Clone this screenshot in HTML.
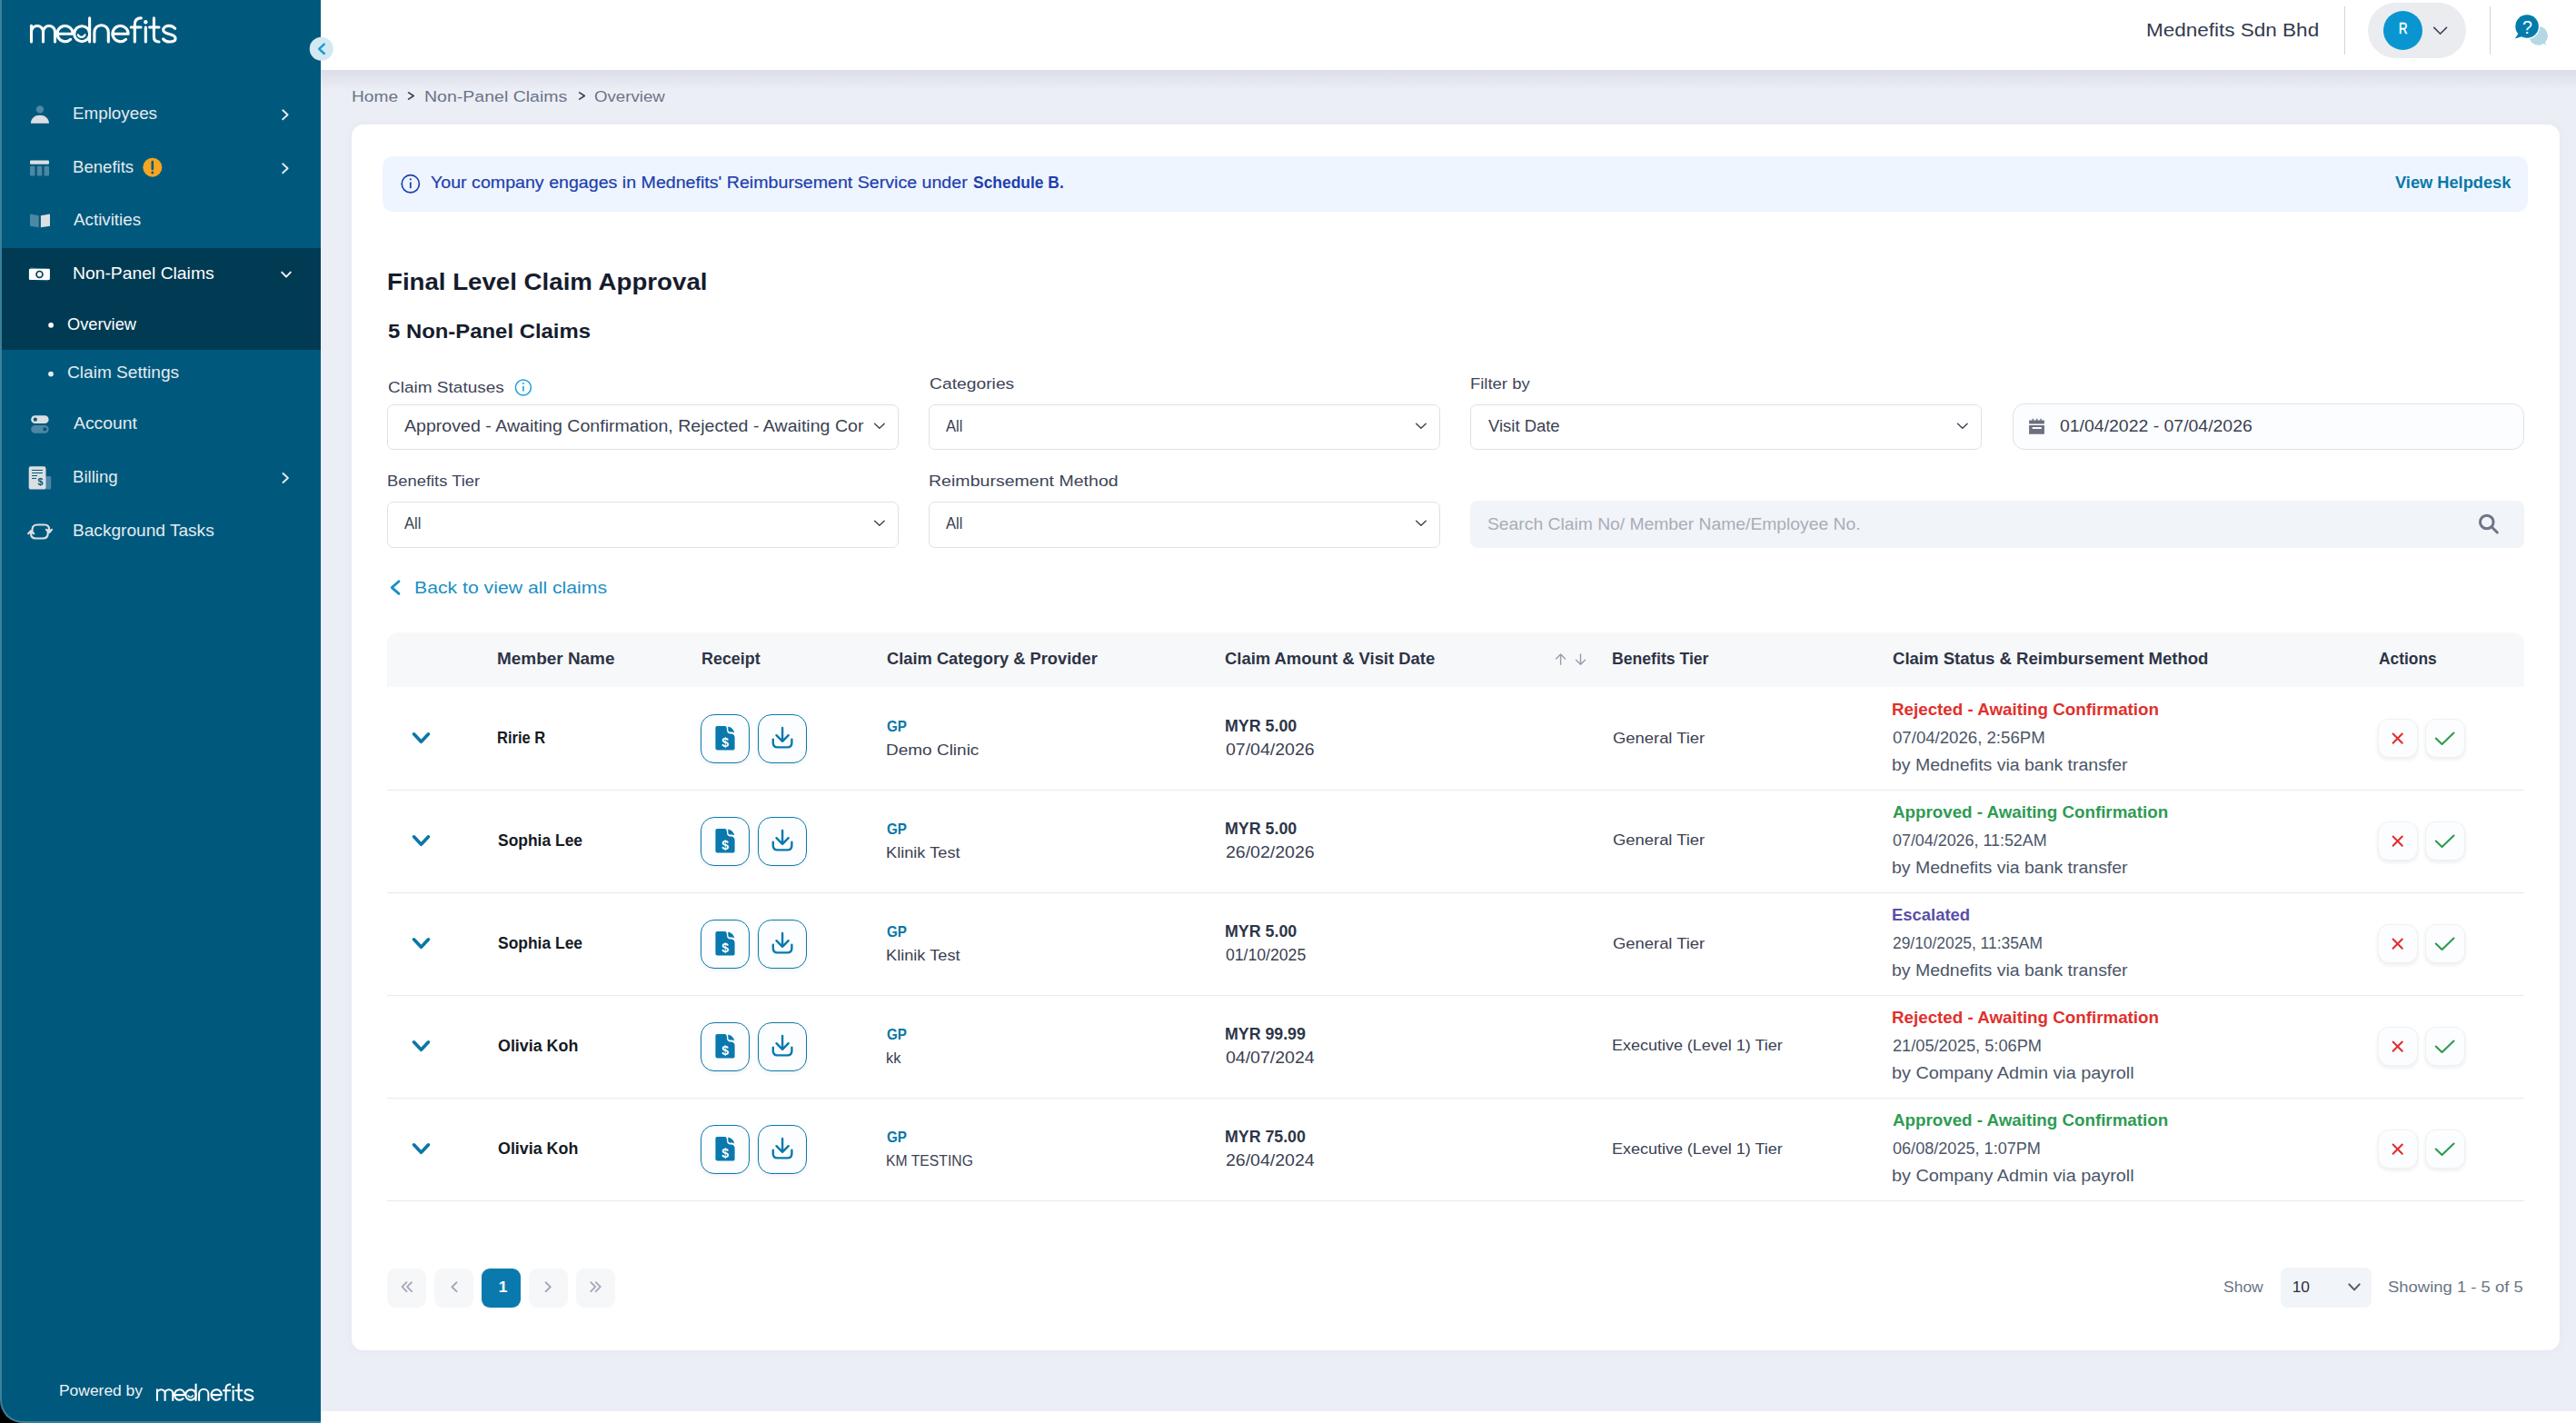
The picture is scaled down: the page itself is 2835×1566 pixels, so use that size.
<!DOCTYPE html>
<html><head><meta charset="utf-8"><title>Mednefits - Non-Panel Claims</title>
<style>
html,body{margin:0;padding:0;}
body{width:2835px;height:1566px;overflow:hidden;position:relative;background:#ffffff;font-family:"Liberation Sans",sans-serif;}
.t{position:absolute;white-space:nowrap;line-height:1;transform-origin:0 0;}
.a{position:absolute;box-sizing:border-box;}
svg{position:absolute;overflow:visible;}
</style></head><body>
<!-- window corner -->
<div class="a" style="left:0;top:1520px;width:40px;height:46px;background:#000"></div>
<!-- main bg -->
<div class="a" style="left:353px;top:0;width:2482px;height:1553px;background:#eceef6"></div>
<!-- header shadow -->
<div class="a" style="left:353px;top:77px;width:2482px;height:22px;background:linear-gradient(#dcdde7,#eceef6)"></div>
<!-- header -->
<div class="a" style="left:353px;top:0;width:2482px;height:77px;background:#ffffff"></div>
<!-- sidebar -->
<div class="a" style="left:0;top:0;width:353px;height:1566px;background:#00597d;border-left:2px solid #3c7f9b;border-bottom:2px solid #3c7f9b;border-bottom-left-radius:25px;"></div>
<div class="a" style="left:2px;top:273px;width:351px;height:112px;background:#013b53"></div>

<!-- card -->
<div class="a" style="left:387px;top:137px;width:2430px;height:1349px;background:#ffffff;border-radius:13px;box-shadow:0 0 10px rgba(190,194,215,0.15)"></div>
<!-- banner -->
<div class="a" style="left:421px;top:172px;width:2361px;height:61px;background:#eef5fe;border-radius:12px"></div>

<!-- selects -->
<div class="a" style="left:426px;top:445px;width:563px;height:50px;border:1.3px solid #dfe1ea;border-radius:7px;background:#fff"></div>
<div class="a" style="left:1022px;top:445px;width:563px;height:50px;border:1.3px solid #dfe1ea;border-radius:7px;background:#fff"></div>
<div class="a" style="left:1618px;top:445px;width:563px;height:50px;border:1.3px solid #dfe1ea;border-radius:7px;background:#fff"></div>
<div class="a" style="left:2215px;top:444px;width:563px;height:51px;border:1.3px solid #dfe1ea;border-radius:13px;background:#fcfdfe"></div>
<div class="a" style="left:426px;top:552px;width:563px;height:51px;border:1.3px solid #dfe1ea;border-radius:7px;background:#fff"></div>
<div class="a" style="left:1022px;top:552px;width:563px;height:51px;border:1.3px solid #dfe1ea;border-radius:7px;background:#fff"></div>
<div class="a" style="left:1618px;top:551px;width:1160px;height:52px;border-radius:8px;background:#f1f4f8"></div>

<!-- table header -->
<div class="a" style="left:426px;top:696px;width:2352px;height:60px;background:#f7f8fa;border-radius:12px 12px 0 0"></div>
<!-- row borders -->
<div class="a" style="left:426px;top:868.5px;width:2352px;height:1.5px;background:#e7e9ef"></div>
<div class="a" style="left:426px;top:981.5px;width:2352px;height:1.5px;background:#e7e9ef"></div>
<div class="a" style="left:426px;top:1094.5px;width:2352px;height:1.5px;background:#e7e9ef"></div>
<div class="a" style="left:426px;top:1207.5px;width:2352px;height:1.5px;background:#e7e9ef"></div>
<div class="a" style="left:426px;top:1320.5px;width:2352px;height:1.5px;background:#e7e9ef"></div>

<!-- pagination -->
<div class="a" style="left:426px;top:1395.5px;width:43px;height:43px;border-radius:9px;background:#f6f7f9"></div>
<div class="a" style="left:478px;top:1395.5px;width:43px;height:43px;border-radius:9px;background:#f6f7f9"></div>
<div class="a" style="left:530px;top:1395.5px;width:43px;height:43px;border-radius:9px;background:#0a7aae"></div>
<div class="a" style="left:582px;top:1395.5px;width:43px;height:43px;border-radius:9px;background:#f6f7f9"></div>
<div class="a" style="left:634px;top:1395.5px;width:43px;height:43px;border-radius:9px;background:#f6f7f9"></div>
<div class="a" style="left:2510px;top:1395px;width:100px;height:44px;border-radius:8px;background:#f1f4f8"></div>

<!-- header pill + dividers -->
<div class="a" style="left:2580px;top:7px;width:1.3px;height:53px;background:#d3d4df"></div>
<div class="a" style="left:2740px;top:7px;width:1.3px;height:53px;background:#d3d4df"></div>
<div class="a" style="left:2606px;top:3px;width:108px;height:61px;border-radius:31px;background:#ebecf0"></div>
<div class="a" style="left:2623px;top:12px;width:43px;height:43px;border-radius:50%;background:#0895d0"></div>
<div class="a" style="left:771px;top:786px;width:54px;height:54px;border:1.3px solid #0979ad;border-radius:15px;background:#fcfdff;box-shadow:0 2px 5px rgba(0,0,0,0.06)"></div>
<div class="a" style="left:834px;top:786px;width:54px;height:54px;border:1.3px solid #0979ad;border-radius:15px;background:#fcfdff;box-shadow:0 2px 5px rgba(0,0,0,0.06)"></div>
<div class="a" style="left:2617px;top:791px;width:44px;height:43px;border:1px solid #f0f1f5;border-radius:12px;background:#fcfdfe;box-shadow:0 2px 4px rgba(20,30,60,0.08)"></div>
<div class="a" style="left:2669px;top:791px;width:44px;height:43px;border:1px solid #f0f1f5;border-radius:12px;background:#fcfdfe;box-shadow:0 2px 4px rgba(20,30,60,0.08)"></div>
<div class="a" style="left:771px;top:899px;width:54px;height:54px;border:1.3px solid #0979ad;border-radius:15px;background:#fcfdff;box-shadow:0 2px 5px rgba(0,0,0,0.06)"></div>
<div class="a" style="left:834px;top:899px;width:54px;height:54px;border:1.3px solid #0979ad;border-radius:15px;background:#fcfdff;box-shadow:0 2px 5px rgba(0,0,0,0.06)"></div>
<div class="a" style="left:2617px;top:904px;width:44px;height:43px;border:1px solid #f0f1f5;border-radius:12px;background:#fcfdfe;box-shadow:0 2px 4px rgba(20,30,60,0.08)"></div>
<div class="a" style="left:2669px;top:904px;width:44px;height:43px;border:1px solid #f0f1f5;border-radius:12px;background:#fcfdfe;box-shadow:0 2px 4px rgba(20,30,60,0.08)"></div>
<div class="a" style="left:771px;top:1012px;width:54px;height:54px;border:1.3px solid #0979ad;border-radius:15px;background:#fcfdff;box-shadow:0 2px 5px rgba(0,0,0,0.06)"></div>
<div class="a" style="left:834px;top:1012px;width:54px;height:54px;border:1.3px solid #0979ad;border-radius:15px;background:#fcfdff;box-shadow:0 2px 5px rgba(0,0,0,0.06)"></div>
<div class="a" style="left:2617px;top:1017px;width:44px;height:43px;border:1px solid #f0f1f5;border-radius:12px;background:#fcfdfe;box-shadow:0 2px 4px rgba(20,30,60,0.08)"></div>
<div class="a" style="left:2669px;top:1017px;width:44px;height:43px;border:1px solid #f0f1f5;border-radius:12px;background:#fcfdfe;box-shadow:0 2px 4px rgba(20,30,60,0.08)"></div>
<div class="a" style="left:771px;top:1125px;width:54px;height:54px;border:1.3px solid #0979ad;border-radius:15px;background:#fcfdff;box-shadow:0 2px 5px rgba(0,0,0,0.06)"></div>
<div class="a" style="left:834px;top:1125px;width:54px;height:54px;border:1.3px solid #0979ad;border-radius:15px;background:#fcfdff;box-shadow:0 2px 5px rgba(0,0,0,0.06)"></div>
<div class="a" style="left:2617px;top:1130px;width:44px;height:43px;border:1px solid #f0f1f5;border-radius:12px;background:#fcfdfe;box-shadow:0 2px 4px rgba(20,30,60,0.08)"></div>
<div class="a" style="left:2669px;top:1130px;width:44px;height:43px;border:1px solid #f0f1f5;border-radius:12px;background:#fcfdfe;box-shadow:0 2px 4px rgba(20,30,60,0.08)"></div>
<div class="a" style="left:771px;top:1238px;width:54px;height:54px;border:1.3px solid #0979ad;border-radius:15px;background:#fcfdff;box-shadow:0 2px 5px rgba(0,0,0,0.06)"></div>
<div class="a" style="left:834px;top:1238px;width:54px;height:54px;border:1.3px solid #0979ad;border-radius:15px;background:#fcfdff;box-shadow:0 2px 5px rgba(0,0,0,0.06)"></div>
<div class="a" style="left:2617px;top:1243px;width:44px;height:43px;border:1px solid #f0f1f5;border-radius:12px;background:#fcfdfe;box-shadow:0 2px 4px rgba(20,30,60,0.08)"></div>
<div class="a" style="left:2669px;top:1243px;width:44px;height:43px;border:1px solid #f0f1f5;border-radius:12px;background:#fcfdfe;box-shadow:0 2px 4px rgba(20,30,60,0.08)"></div>
<svg style="left:0;top:0" width="2835" height="1566" viewBox="0 0 2835 1566">
<defs>
<g id="logo" fill="none" stroke="#fff" stroke-width="3.1" stroke-linecap="round" stroke-linejoin="round">
  <path d="M34.5,46 V28.4 M34.5,35 A6.5,6.5 0 0 1 47.5,35 V46 M47.5,35 A6.5,6.5 0 0 1 60.5,35 V46"/>
  <path d="M63,37.3 H80.2 A8.6,8.6 0 1 0 77.6,43.3"/>
  <circle cx="90.2" cy="37.2" r="8.5"/>
  <path d="M98.6,19.9 V46"/>
  <path d="M85.9,38.3 A3.9,3.4 0 0 0 93.5,38.3" stroke-width="2.3"/>
  <path d="M103.9,46 V35.4 A7.7,7.7 0 0 1 119.3,35.4 V46"/>
  <path d="M123.9,37.3 H141.1 A8.6,8.6 0 1 0 138.5,43.3"/>
  <path d="M148.3,46 V27 C148.3,22.2 150.8,19.9 155.3,19.9 M144.2,30 H155"/>
  <path d="M160.3,30 V46"/>
  <circle cx="160.3" cy="24.3" r="2.2" fill="#fff" stroke="none"/>
  <path d="M169.4,19.9 V40.8 C169.4,44.5 171.2,46 175,46 M164.6,30 H175"/>
  <path d="M192.6,31.3 C190.6,29.2 188.2,28.4 185.8,28.4 C182.2,28.4 179.7,30.2 179.7,33 C179.7,35.8 182.4,36.6 186.2,37.4 C190.3,38.3 193.1,39.4 193.1,42.2 C193.1,45 190.6,46 186.6,46 C183.6,46 181.2,45.1 179.6,43"/>
</g>
</defs>
<use href="#logo"/>
<g transform="translate(150,1510.3) scale(0.665)"><use href="#logo"/></g>

<!-- collapse button -->
<circle cx="353.7" cy="53.7" r="13" fill="#d2e8f2"/>
<path d="M356.8,48.6 L351.2,53.8 L356.8,59" fill="none" stroke="#1a9ad6" stroke-width="2.4" stroke-linecap="round" stroke-linejoin="round"/>

<!-- sidebar icons -->
<g fill="#dcdfe2">
  <circle cx="44" cy="120.4" r="4.2" fill="#4c87a4"/>
  <path d="M33.9,135.8 C33.9,130.2 38.4,126.8 43.9,126.8 C49.4,126.8 53.9,130.2 53.9,135.8 Z"/>
  <rect x="33" y="176.5" width="21" height="4.3" rx="1"/>
  <rect x="33" y="182.8" width="5.4" height="10.8" rx="1.3" fill="#4c87a4"/>
  <rect x="40.8" y="182.8" width="5.4" height="10.8" rx="1.3" fill="#4c87a4"/>
  <rect x="48.6" y="182.8" width="5.4" height="10.8" rx="1.3" fill="#4c87a4"/>
  <path d="M33,235.4 L42.7,237.3 L42.7,250.3 L33,248.7 Z" fill="#4c87a4"/>
  <path d="M44.9,237.3 L55,235.4 L55,248.7 L44.9,250.3 Z"/>
  <path d="M33.5,294.2 L52,296 L53,309.5 L35,307.8 Z" fill="#2e6a86"/>
  <rect x="31.9" y="295.8" width="23" height="12.2" rx="1.2" fill="#ffffff"/>
  <circle cx="43.5" cy="301.9" r="3.4" fill="none" stroke="#013b53" stroke-width="1.7"/>
  <rect x="34.2" y="457.3" width="19.4" height="8.8" rx="4.4"/>
  <circle cx="38.8" cy="461.7" r="2.1" fill="#00597d"/>
  <rect x="34.2" y="468" width="19.4" height="8.7" rx="4.35" fill="#4c87a4"/>
  <circle cx="49.3" cy="472.3" r="2.1" fill="#00597d"/>
  <rect x="50" y="524" width="6.2" height="14.6" rx="1.5" fill="#4c87a4"/>
  <rect x="31.7" y="513.3" width="18.8" height="25.3" rx="2.2"/>
  <g stroke="#00597d" stroke-width="1.2"><path d="M35,517.5 H47 M35,520.5 H47 M35,523.5 H41 M35,526.5 H40"/></g>
  <text x="44.3" y="533.5" font-family="Liberation Sans" font-weight="700" font-size="10.5" fill="#00597d" text-anchor="middle">$</text>
</g>
<g fill="none" stroke="#dcdfe2" stroke-width="2.2" stroke-linecap="round" stroke-linejoin="round">
  <path d="M35.5,586.5 V583 C35.5,579.5 37.5,577.5 41,577.5 H49 C52.5,577.5 54.2,579.5 54.2,583 V585.5"/>
  <path d="M51,582.8 L54.2,586 L57,582.8"/>
  <path d="M52.7,583.5 V587 C52.7,590.5 50.7,592.5 47.2,592.5 H39.2 C35.7,592.5 34,590.5 34,587 V584.5"/>
  <path d="M31.2,587.2 L34,584.2 L37.2,587.2"/>
</g>
<!-- sidebar chevrons -->
<g fill="none" stroke="#e5ebef" stroke-width="1.9" stroke-linecap="round" stroke-linejoin="round">
  <path d="M311.2,121.3 L316.6,126.3 L311.2,131.3"/>
  <path d="M311.2,180.3 L316.6,185.3 L311.2,190.3"/>
  <path d="M311.5,521 L316.9,526 L311.5,531"/>
  <path d="M310.2,299.6 L315,304.6 L319.8,299.6" stroke="#ffffff"/>
</g>
<circle cx="56.1" cy="357.8" r="2.9" fill="#ffffff"/>
<circle cx="56" cy="411.6" r="2.9" fill="#e5ebef"/>
<circle cx="167.8" cy="184.2" r="10.5" fill="#f5a623"/>
<path d="M167.8,178 V186" stroke="#00597d" stroke-width="2.6" stroke-linecap="round"/>
<circle cx="167.8" cy="190" r="1.4" fill="#00597d"/>

<!-- header chevron + help -->
<path d="M2678.3,29.9 L2685.6,37.3 L2693,29.9" fill="none" stroke="#3b3d54" stroke-width="1.5"/>
<circle cx="2793.6" cy="39.4" r="10.4" fill="#b4d8e6"/>
<path d="M2796,45 L2802.2,50 L2799.5,42" fill="#b4d8e6"/>
<circle cx="2781.1" cy="29" r="14.2" fill="#ffffff"/>
<circle cx="2781.1" cy="29" r="12.8" fill="#037cac"/>
<path d="M2772,36 L2767.9,42.5 L2776,40" fill="#037cac"/>
<text x="2781.4" y="36.5" font-family="Liberation Sans" font-weight="400" font-size="19.5" fill="#fff" text-anchor="middle">?</text>

<!-- breadcrumb chevrons -->
<g fill="none" stroke="#3a3f55" stroke-width="1.7" stroke-linecap="round" stroke-linejoin="round">
  <path d="M449.6,101.9 L455.2,105.5 L449.6,109.1"/>
  <path d="M637.7,101.9 L643.3,105.5 L637.7,109.1"/>
</g>

<!-- banner info icon -->
<circle cx="451.8" cy="202.3" r="9.6" fill="none" stroke="#1f3fae" stroke-width="1.7"/>
<path d="M451.8,200.5 V207.2" stroke="#1f3fae" stroke-width="1.8"/>
<circle cx="451.8" cy="197.3" r="1.1" fill="#1f3fae"/>
<!-- claim status info icon -->
<circle cx="575.9" cy="426.5" r="8.5" fill="none" stroke="#1a9fd8" stroke-width="1.5"/>
<path d="M575.9,424.8 V430.6" stroke="#1a9fd8" stroke-width="1.6"/>
<circle cx="575.9" cy="422" r="1" fill="#1a9fd8"/>

<!-- select chevrons -->
<g fill="none" stroke="#3b4253" stroke-width="1.4" stroke-linecap="round" stroke-linejoin="round">
  <path d="M962.6,466.2 L967.9,471.3 L973.2,466.2"/>
  <path d="M1558.6,466.2 L1563.9,471.3 L1569.2,466.2"/>
  <path d="M2154.5,466.2 L2159.8,471.3 L2165.1,466.2"/>
  <path d="M962.6,573.2 L967.9,578.3 L973.2,573.2"/>
  <path d="M1558.6,573.2 L1563.9,578.3 L1569.2,573.2"/>
</g>
<!-- calendar -->
<g fill="#6b7080">
  <rect x="2233.1" y="462.6" width="16.8" height="3.8" rx="0.6"/>
  <rect x="2236.6" y="460.8" width="1.4" height="2.5"/>
  <rect x="2240.9" y="460.8" width="1.4" height="2.5"/>
  <rect x="2245.3" y="460.8" width="1.4" height="2.5"/>
  <path d="M2233.1,468.1 H2249.9 V477.8 H2233.1 Z M2236.6,469.9 V471.9 H2246.8 V469.9 Z" fill-rule="evenodd"/>
</g>
<!-- search -->
<g fill="none" stroke="#6e7489" stroke-width="3" stroke-linecap="round">
  <circle cx="2736.8" cy="574.5" r="7.3"/>
  <path d="M2742.3,580 L2748.3,586"/>
</g>
<!-- back chevron -->
<path d="M439,639.8 L431.2,646.6 L439,653.4" fill="none" stroke="#1a8fc4" stroke-width="2.8" stroke-linecap="round" stroke-linejoin="round"/>
<!-- sort arrows -->
<g fill="none" stroke="#979eab" stroke-width="1.4" stroke-linecap="round" stroke-linejoin="round">
  <path d="M1717.6,720 V731.3 M1712.6,725 L1717.6,720 L1722.6,725"/>
  <path d="M1739.5,720 V731.3 M1734.5,726.3 L1739.5,731.3 L1744.5,726.3"/>
</g>

<!-- pagination icons -->
<g fill="none" stroke="#a5a8b8" stroke-width="1.9" stroke-linecap="round" stroke-linejoin="round">
  <path d="M447.5,1411.2 L442.6,1416.2 L447.5,1421.2 M453,1411.2 L448.1,1416.2 L453,1421.2"/>
  <path d="M502.6,1411.2 L497.4,1416.2 L502.6,1421.2"/>
  <path d="M600.6,1411.2 L605.8,1416.2 L600.6,1421.2"/>
  <path d="M650.3,1411.2 L655.2,1416.2 L650.3,1421.2 M655.8,1411.2 L660.7,1416.2 L655.8,1421.2"/>
</g>
<path d="M2585.3,1413.4 L2591,1419.4 L2596.7,1413.4" fill="none" stroke="#555b6e" stroke-width="2.1" stroke-linecap="round" stroke-linejoin="round"/>
<path d="M455.5,807.8 L463.5,816.3 L471.5,807.8" fill="none" stroke="#0a76a5" stroke-width="3.6" stroke-linecap="round" stroke-linejoin="round"/>
<g fill="#0979ad">
<path d="M789.5,798.9 H797.6 C799.3,798.9 799.9,800.3 799.9,802 C799.9,805.8 801.1,807.6 804.6,807.6 C807,807.6 808.6,809.3 808.6,811.5 V823.4 C808.6,824.7 807.6,825.5 806.4,825.5 H789.6 C788.3,825.5 787.4,824.6 787.4,823.3 V801 C787.4,799.8 788.3,798.9 789.5,798.9 Z"/>
<path d="M801.3,799.4 C805.3,800.2 807.9,803.2 808.3,806.6 C806.5,805.4 804.5,805.7 803.3,805.6 C801.9,805.5 801.3,804.2 801.3,802.5 Z"/>
</g>
<text x="798.2" y="822.4" font-family="Liberation Sans" font-weight="700" font-size="14" fill="#fff" text-anchor="middle">$</text>
<g fill="none" stroke="#0979ad" stroke-width="2.4" stroke-linecap="round" stroke-linejoin="round">
<path d="M861.1,801 V815.8 M854.5,809.2 L861.1,815.8 L867.7,809.2"/>
<path d="M850.8,813.8 V817.5 C850.8,820.8 852.4,822.4 855.6,822.4 H866.6 C869.8,822.4 871.4,820.8 871.4,817.5 V813.8"/>
</g>
<path d="M2633.6,807.5 L2643.8,817.8 M2643.8,807.5 L2633.6,817.8" fill="none" stroke="#e02d2d" stroke-width="2" stroke-linecap="round"/>
<path d="M2680.8,812.5 L2687.5,819 L2700.5,806.5" fill="none" stroke="#2e9a4e" stroke-width="2.1" stroke-linecap="round" stroke-linejoin="round"/>
<path d="M455.5,920.8 L463.5,929.3 L471.5,920.8" fill="none" stroke="#0a76a5" stroke-width="3.6" stroke-linecap="round" stroke-linejoin="round"/>
<g fill="#0979ad">
<path d="M789.5,911.9 H797.6 C799.3,911.9 799.9,913.3 799.9,915 C799.9,918.8 801.1,920.6 804.6,920.6 C807,920.6 808.6,922.3 808.6,924.5 V936.4 C808.6,937.7 807.6,938.5 806.4,938.5 H789.6 C788.3,938.5 787.4,937.6 787.4,936.3 V914 C787.4,912.8 788.3,911.9 789.5,911.9 Z"/>
<path d="M801.3,912.4 C805.3,913.2 807.9,916.2 808.3,919.6 C806.5,918.4 804.5,918.7 803.3,918.6 C801.9,918.5 801.3,917.2 801.3,915.5 Z"/>
</g>
<text x="798.2" y="935.4" font-family="Liberation Sans" font-weight="700" font-size="14" fill="#fff" text-anchor="middle">$</text>
<g fill="none" stroke="#0979ad" stroke-width="2.4" stroke-linecap="round" stroke-linejoin="round">
<path d="M861.1,914 V928.8 M854.5,922.2 L861.1,928.8 L867.7,922.2"/>
<path d="M850.8,926.8 V930.5 C850.8,933.8 852.4,935.4 855.6,935.4 H866.6 C869.8,935.4 871.4,933.8 871.4,930.5 V926.8"/>
</g>
<path d="M2633.6,920.5 L2643.8,930.8 M2643.8,920.5 L2633.6,930.8" fill="none" stroke="#e02d2d" stroke-width="2" stroke-linecap="round"/>
<path d="M2680.8,925.5 L2687.5,932 L2700.5,919.5" fill="none" stroke="#2e9a4e" stroke-width="2.1" stroke-linecap="round" stroke-linejoin="round"/>
<path d="M455.5,1033.8 L463.5,1042.3 L471.5,1033.8" fill="none" stroke="#0a76a5" stroke-width="3.6" stroke-linecap="round" stroke-linejoin="round"/>
<g fill="#0979ad">
<path d="M789.5,1024.9 H797.6 C799.3,1024.9 799.9,1026.3 799.9,1028 C799.9,1031.8 801.1,1033.6 804.6,1033.6 C807,1033.6 808.6,1035.3 808.6,1037.5 V1049.4 C808.6,1050.7 807.6,1051.5 806.4,1051.5 H789.6 C788.3,1051.5 787.4,1050.6 787.4,1049.3 V1027 C787.4,1025.8 788.3,1024.9 789.5,1024.9 Z"/>
<path d="M801.3,1025.4 C805.3,1026.2 807.9,1029.2 808.3,1032.6 C806.5,1031.4 804.5,1031.7 803.3,1031.6 C801.9,1031.5 801.3,1030.2 801.3,1028.5 Z"/>
</g>
<text x="798.2" y="1048.4" font-family="Liberation Sans" font-weight="700" font-size="14" fill="#fff" text-anchor="middle">$</text>
<g fill="none" stroke="#0979ad" stroke-width="2.4" stroke-linecap="round" stroke-linejoin="round">
<path d="M861.1,1027 V1041.8 M854.5,1035.2 L861.1,1041.8 L867.7,1035.2"/>
<path d="M850.8,1039.8 V1043.5 C850.8,1046.8 852.4,1048.4 855.6,1048.4 H866.6 C869.8,1048.4 871.4,1046.8 871.4,1043.5 V1039.8"/>
</g>
<path d="M2633.6,1033.5 L2643.8,1043.8 M2643.8,1033.5 L2633.6,1043.8" fill="none" stroke="#e02d2d" stroke-width="2" stroke-linecap="round"/>
<path d="M2680.8,1038.5 L2687.5,1045 L2700.5,1032.5" fill="none" stroke="#2e9a4e" stroke-width="2.1" stroke-linecap="round" stroke-linejoin="round"/>
<path d="M455.5,1146.8 L463.5,1155.3 L471.5,1146.8" fill="none" stroke="#0a76a5" stroke-width="3.6" stroke-linecap="round" stroke-linejoin="round"/>
<g fill="#0979ad">
<path d="M789.5,1137.9 H797.6 C799.3,1137.9 799.9,1139.3 799.9,1141 C799.9,1144.8 801.1,1146.6 804.6,1146.6 C807,1146.6 808.6,1148.3 808.6,1150.5 V1162.4 C808.6,1163.7 807.6,1164.5 806.4,1164.5 H789.6 C788.3,1164.5 787.4,1163.6 787.4,1162.3 V1140 C787.4,1138.8 788.3,1137.9 789.5,1137.9 Z"/>
<path d="M801.3,1138.4 C805.3,1139.2 807.9,1142.2 808.3,1145.6 C806.5,1144.4 804.5,1144.7 803.3,1144.6 C801.9,1144.5 801.3,1143.2 801.3,1141.5 Z"/>
</g>
<text x="798.2" y="1161.4" font-family="Liberation Sans" font-weight="700" font-size="14" fill="#fff" text-anchor="middle">$</text>
<g fill="none" stroke="#0979ad" stroke-width="2.4" stroke-linecap="round" stroke-linejoin="round">
<path d="M861.1,1140 V1154.8 M854.5,1148.2 L861.1,1154.8 L867.7,1148.2"/>
<path d="M850.8,1152.8 V1156.5 C850.8,1159.8 852.4,1161.4 855.6,1161.4 H866.6 C869.8,1161.4 871.4,1159.8 871.4,1156.5 V1152.8"/>
</g>
<path d="M2633.6,1146.5 L2643.8,1156.8 M2643.8,1146.5 L2633.6,1156.8" fill="none" stroke="#e02d2d" stroke-width="2" stroke-linecap="round"/>
<path d="M2680.8,1151.5 L2687.5,1158 L2700.5,1145.5" fill="none" stroke="#2e9a4e" stroke-width="2.1" stroke-linecap="round" stroke-linejoin="round"/>
<path d="M455.5,1259.8 L463.5,1268.3 L471.5,1259.8" fill="none" stroke="#0a76a5" stroke-width="3.6" stroke-linecap="round" stroke-linejoin="round"/>
<g fill="#0979ad">
<path d="M789.5,1250.9 H797.6 C799.3,1250.9 799.9,1252.3 799.9,1254 C799.9,1257.8 801.1,1259.6 804.6,1259.6 C807,1259.6 808.6,1261.3 808.6,1263.5 V1275.4 C808.6,1276.7 807.6,1277.5 806.4,1277.5 H789.6 C788.3,1277.5 787.4,1276.6 787.4,1275.3 V1253 C787.4,1251.8 788.3,1250.9 789.5,1250.9 Z"/>
<path d="M801.3,1251.4 C805.3,1252.2 807.9,1255.2 808.3,1258.6 C806.5,1257.4 804.5,1257.7 803.3,1257.6 C801.9,1257.5 801.3,1256.2 801.3,1254.5 Z"/>
</g>
<text x="798.2" y="1274.4" font-family="Liberation Sans" font-weight="700" font-size="14" fill="#fff" text-anchor="middle">$</text>
<g fill="none" stroke="#0979ad" stroke-width="2.4" stroke-linecap="round" stroke-linejoin="round">
<path d="M861.1,1253 V1267.8 M854.5,1261.2 L861.1,1267.8 L867.7,1261.2"/>
<path d="M850.8,1265.8 V1269.5 C850.8,1272.8 852.4,1274.4 855.6,1274.4 H866.6 C869.8,1274.4 871.4,1272.8 871.4,1269.5 V1265.8"/>
</g>
<path d="M2633.6,1259.5 L2643.8,1269.8 M2643.8,1259.5 L2633.6,1269.8" fill="none" stroke="#e02d2d" stroke-width="2" stroke-linecap="round"/>
<path d="M2680.8,1264.5 L2687.5,1271 L2700.5,1258.5" fill="none" stroke="#2e9a4e" stroke-width="2.1" stroke-linecap="round" stroke-linejoin="round"/>
</svg>
<div class="t" style="left:79.75px;top:117.00px;font-size:17.965px;font-weight:400;color:#e5ebef;transform:scaleX(1.0474);">Employees</div>
<div class="t" style="left:79.77px;top:176.00px;font-size:17.965px;font-weight:400;color:#e5ebef;transform:scaleX(1.0345);">Benefits</div>
<div class="t" style="left:81.20px;top:234.00px;font-size:17.965px;font-weight:400;color:#e5ebef;transform:scaleX(1.0458);">Activities</div>
<div class="t" style="left:79.72px;top:293.00px;font-size:17.965px;font-weight:400;color:#ffffff;transform:scaleX(1.0758);">Non-Panel Claims</div>
<div class="t" style="left:74.40px;top:349.00px;font-size:17.965px;font-weight:400;color:#ffffff;transform:scaleX(1.0151);">Overview</div>
<div class="t" style="left:74.40px;top:402.00px;font-size:17.965px;font-weight:400;color:#e5ebef;transform:scaleX(1.0634);">Claim Settings</div>
<div class="t" style="left:81.30px;top:458.00px;font-size:17.965px;font-weight:400;color:#e5ebef;transform:scaleX(1.0758);">Account</div>
<div class="t" style="left:80.26px;top:517.00px;font-size:17.965px;font-weight:400;color:#e5ebef;transform:scaleX(1.0367);">Billing</div>
<div class="t" style="left:80.24px;top:576.00px;font-size:17.965px;font-weight:400;color:#e5ebef;transform:scaleX(1.0637);">Background Tasks</div>
<div class="t" style="left:65.00px;top:1523.00px;font-size:15.869px;font-weight:400;color:#eef2f5;transform:scaleX(1.0988);">Powered by</div>
<div class="t" style="left:2361.90px;top:23.00px;font-size:20.510px;font-weight:400;color:#333a4d;transform:scaleX(1.0977);">Mednefits Sdn Bhd</div>
<div class="t" style="left:2639.87px;top:24.00px;font-size:15.869px;font-weight:400;color:#ffffff;transform:scaleX(0.8300);-webkit-text-stroke:0.5px #fff;">R</div>
<div class="t" style="left:387.00px;top:98.00px;font-size:17.366px;font-weight:400;color:#6b7386;transform:scaleX(1.1019);">Home</div>
<div class="t" style="left:466.58px;top:98.00px;font-size:17.366px;font-weight:400;color:#6b7386;transform:scaleX(1.1242);">Non-Panel Claims</div>
<div class="t" style="left:654.30px;top:98.00px;font-size:17.366px;font-weight:400;color:#6f7388;transform:scaleX(1.0754);">Overview</div>
<div class="t" style="left:474.40px;top:193.00px;font-size:17.516px;font-weight:400;color:#1f3fae;transform:scaleX(1.1209);-webkit-text-stroke:0.2px #1f3fae;">Your company engages in Mednefits' Reimbursement Service under</div>
<div class="t" style="left:1071.10px;top:193.00px;font-size:17.516px;font-weight:700;color:#1f3fae;transform:scaleX(0.9960);">Schedule B.</div>
<div class="t" style="left:2635.70px;top:193.00px;font-size:17.666px;font-weight:700;color:#0a78a8;transform:scaleX(1.0331);">View Helpdesk</div>
<div class="t" style="left:425.64px;top:297.00px;font-size:26.049px;font-weight:700;color:#161c2d;transform:scaleX(1.0624);">Final Level Claim Approval</div>
<div class="t" style="left:426.70px;top:353.00px;font-size:22.756px;font-weight:700;color:#161c2d;transform:scaleX(1.0499);">5 Non-Panel Claims</div>
<div class="t" style="left:426.70px;top:418.00px;font-size:17.366px;font-weight:400;color:#3d4556;transform:scaleX(1.0952);">Claim Statuses</div>
<div class="t" style="left:1022.90px;top:414.00px;font-size:17.366px;font-weight:400;color:#3d4556;transform:scaleX(1.1107);">Categories</div>
<div class="t" style="left:1618.14px;top:414.00px;font-size:17.366px;font-weight:400;color:#3d4556;transform:scaleX(1.0630);">Filter by</div>
<div class="t" style="left:425.64px;top:521.00px;font-size:17.366px;font-weight:400;color:#3d4556;transform:scaleX(1.0581);">Benefits Tier</div>
<div class="t" style="left:1021.77px;top:521.00px;font-size:17.366px;font-weight:400;color:#3d4556;transform:scaleX(1.1264);">Reimbursement Method</div>
<div class="t" style="left:445.40px;top:461.00px;font-size:17.666px;font-weight:400;color:#3b4253;transform:scaleX(1.1093);">Approved - Awaiting Confirmation, Rejected - Awaiting Cor</div>
<div class="t" style="left:1041.30px;top:461.00px;font-size:17.666px;font-weight:400;color:#3b4253;transform:scaleX(0.9412);">All</div>
<div class="t" style="left:1637.90px;top:461.00px;font-size:17.666px;font-weight:400;color:#3b4253;transform:scaleX(1.0448);">Visit Date</div>
<div class="t" style="left:2267.30px;top:461.00px;font-size:17.965px;font-weight:400;color:#3b4253;transform:scaleX(1.0824);">01/04/2022 - 07/04/2026</div>
<div class="t" style="left:445.10px;top:568.00px;font-size:17.666px;font-weight:400;color:#3b4253;transform:scaleX(0.9412);">All</div>
<div class="t" style="left:1041.30px;top:568.00px;font-size:17.666px;font-weight:400;color:#3b4253;transform:scaleX(0.9412);">All</div>
<div class="t" style="left:1636.70px;top:569.00px;font-size:17.666px;font-weight:400;color:#a9adb9;transform:scaleX(1.0925);">Search Claim No/ Member Name/Employee No.</div>
<div class="t" style="left:456.19px;top:637.00px;font-size:19.163px;font-weight:400;color:#1a8fc4;transform:scaleX(1.1066);">Back to view all claims</div>
<div class="t" style="left:546.83px;top:717.00px;font-size:17.666px;font-weight:700;color:#2d3446;transform:scaleX(1.0728);">Member Name</div>
<div class="t" style="left:771.69px;top:717.00px;font-size:17.666px;font-weight:700;color:#2d3446;transform:scaleX(1.0143);">Receipt</div>
<div class="t" style="left:976.40px;top:717.00px;font-size:17.666px;font-weight:700;color:#2d3446;transform:scaleX(1.0360);">Claim Category &amp; Provider</div>
<div class="t" style="left:1348.30px;top:717.00px;font-size:17.666px;font-weight:700;color:#2d3446;transform:scaleX(1.0424);">Claim Amount &amp; Visit Date</div>
<div class="t" style="left:1774.10px;top:717.00px;font-size:17.666px;font-weight:700;color:#2d3446;transform:scaleX(0.9985);">Benefits Tier</div>
<div class="t" style="left:2082.70px;top:717.00px;font-size:17.666px;font-weight:700;color:#2d3446;transform:scaleX(1.0508);">Claim Status &amp; Reimbursement Method</div>
<div class="t" style="left:2618.40px;top:717.00px;font-size:17.666px;font-weight:700;color:#2d3446;transform:scaleX(0.9842);">Actions</div>
<div class="t" style="left:546.96px;top:804.00px;font-size:17.516px;font-weight:700;color:#161a24;transform:scaleX(0.9432);">Ririe R</div>
<div class="t" style="left:976.40px;top:791.00px;font-size:17.217px;font-weight:700;color:#0a78a8;transform:scaleX(0.8859);">GP</div>
<div class="t" style="left:975.31px;top:817.00px;font-size:17.366px;font-weight:400;color:#3a4152;transform:scaleX(1.0938);">Demo Clinic</div>
<div class="t" style="left:1347.69px;top:791.00px;font-size:17.666px;font-weight:700;color:#2c3548;transform:scaleX(1.0092);">MYR 5.00</div>
<div class="t" style="left:1348.70px;top:816.00px;font-size:18.414px;font-weight:400;color:#3a4152;transform:scaleX(1.0600);">07/04/2026</div>
<div class="t" style="left:1775.10px;top:804.00px;font-size:17.366px;font-weight:400;color:#3a4152;transform:scaleX(1.0598);">General Tier</div>
<div class="t" style="left:2081.95px;top:773.00px;font-size:17.965px;font-weight:700;color:#e0302c;transform:scaleX(1.0450);">Rejected - Awaiting Confirmation</div>
<div class="t" style="left:2083.00px;top:803.00px;font-size:18.414px;font-weight:400;color:#4b5568;transform:scaleX(1.0113);">07/04/2026, 2:56PM</div>
<div class="t" style="left:2081.90px;top:834.00px;font-size:17.666px;font-weight:400;color:#4b5568;transform:scaleX(1.1021);">by Mednefits via bank transfer</div>
<div class="t" style="left:547.90px;top:917.00px;font-size:17.516px;font-weight:700;color:#161a24;transform:scaleX(0.9966);">Sophia Lee</div>
<div class="t" style="left:976.40px;top:904.00px;font-size:17.217px;font-weight:700;color:#0a78a8;transform:scaleX(0.8859);">GP</div>
<div class="t" style="left:975.35px;top:930.00px;font-size:17.366px;font-weight:400;color:#3a4152;transform:scaleX(1.0476);">Klinik Test</div>
<div class="t" style="left:1347.69px;top:904.00px;font-size:17.666px;font-weight:700;color:#2c3548;transform:scaleX(1.0092);">MYR 5.00</div>
<div class="t" style="left:1348.70px;top:929.00px;font-size:18.414px;font-weight:400;color:#3a4152;transform:scaleX(1.0600);">26/02/2026</div>
<div class="t" style="left:1775.10px;top:916.00px;font-size:17.366px;font-weight:400;color:#3a4152;transform:scaleX(1.0598);">General Tier</div>
<div class="t" style="left:2083.00px;top:886.00px;font-size:17.965px;font-weight:700;color:#2e9b53;transform:scaleX(1.0444);">Approved - Awaiting Confirmation</div>
<div class="t" style="left:2083.00px;top:916.00px;font-size:18.414px;font-weight:400;color:#4b5568;transform:scaleX(0.9710);">07/04/2026, 11:52AM</div>
<div class="t" style="left:2081.90px;top:947.00px;font-size:17.666px;font-weight:400;color:#4b5568;transform:scaleX(1.1021);">by Mednefits via bank transfer</div>
<div class="t" style="left:547.90px;top:1030.00px;font-size:17.516px;font-weight:700;color:#161a24;transform:scaleX(0.9966);">Sophia Lee</div>
<div class="t" style="left:976.40px;top:1017.00px;font-size:17.217px;font-weight:700;color:#0a78a8;transform:scaleX(0.8859);">GP</div>
<div class="t" style="left:975.35px;top:1043.00px;font-size:17.366px;font-weight:400;color:#3a4152;transform:scaleX(1.0476);">Klinik Test</div>
<div class="t" style="left:1347.69px;top:1017.00px;font-size:17.666px;font-weight:700;color:#2c3548;transform:scaleX(1.0092);">MYR 5.00</div>
<div class="t" style="left:1348.70px;top:1042.00px;font-size:18.414px;font-weight:400;color:#3a4152;transform:scaleX(0.9577);">01/10/2025</div>
<div class="t" style="left:1775.10px;top:1030.00px;font-size:17.366px;font-weight:400;color:#3a4152;transform:scaleX(1.0598);">General Tier</div>
<div class="t" style="left:2081.97px;top:999.00px;font-size:17.965px;font-weight:700;color:#5a4fa6;transform:scaleX(1.0261);">Escalated</div>
<div class="t" style="left:2083.00px;top:1029.00px;font-size:18.414px;font-weight:400;color:#4b5568;transform:scaleX(0.9439);">29/10/2025, 11:35AM</div>
<div class="t" style="left:2081.90px;top:1060.00px;font-size:17.666px;font-weight:400;color:#4b5568;transform:scaleX(1.1021);">by Mednefits via bank transfer</div>
<div class="t" style="left:547.90px;top:1143.00px;font-size:17.516px;font-weight:700;color:#161a24;transform:scaleX(1.0203);">Olivia Koh</div>
<div class="t" style="left:976.40px;top:1130.00px;font-size:17.217px;font-weight:700;color:#0a78a8;transform:scaleX(0.8859);">GP</div>
<div class="t" style="left:975.45px;top:1156.00px;font-size:17.366px;font-weight:400;color:#3a4152;transform:scaleX(0.9473);">kk</div>
<div class="t" style="left:1347.69px;top:1130.00px;font-size:17.666px;font-weight:700;color:#2c3548;transform:scaleX(1.0057);">MYR 99.99</div>
<div class="t" style="left:1348.70px;top:1155.00px;font-size:18.414px;font-weight:400;color:#3a4152;transform:scaleX(1.0600);">04/07/2024</div>
<div class="t" style="left:1774.07px;top:1142.00px;font-size:17.366px;font-weight:400;color:#3a4152;transform:scaleX(1.0347);">Executive (Level 1) Tier</div>
<div class="t" style="left:2081.95px;top:1112.00px;font-size:17.965px;font-weight:700;color:#e0302c;transform:scaleX(1.0450);">Rejected - Awaiting Confirmation</div>
<div class="t" style="left:2083.00px;top:1142.00px;font-size:18.414px;font-weight:400;color:#4b5568;transform:scaleX(0.9888);">21/05/2025, 5:06PM</div>
<div class="t" style="left:2081.88px;top:1173.00px;font-size:17.666px;font-weight:400;color:#4b5568;transform:scaleX(1.1229);">by Company Admin via payroll</div>
<div class="t" style="left:547.90px;top:1256.00px;font-size:17.516px;font-weight:700;color:#161a24;transform:scaleX(1.0203);">Olivia Koh</div>
<div class="t" style="left:976.40px;top:1243.00px;font-size:17.217px;font-weight:700;color:#0a78a8;transform:scaleX(0.8859);">GP</div>
<div class="t" style="left:975.49px;top:1269.00px;font-size:17.366px;font-weight:400;color:#3a4152;transform:scaleX(0.9064);">KM TESTING</div>
<div class="t" style="left:1347.69px;top:1243.00px;font-size:17.666px;font-weight:700;color:#2c3548;transform:scaleX(1.0057);">MYR 75.00</div>
<div class="t" style="left:1348.70px;top:1268.00px;font-size:18.414px;font-weight:400;color:#3a4152;transform:scaleX(1.0600);">26/04/2024</div>
<div class="t" style="left:1774.07px;top:1256.00px;font-size:17.366px;font-weight:400;color:#3a4152;transform:scaleX(1.0347);">Executive (Level 1) Tier</div>
<div class="t" style="left:2083.00px;top:1225.00px;font-size:17.965px;font-weight:700;color:#2e9b53;transform:scaleX(1.0444);">Approved - Awaiting Confirmation</div>
<div class="t" style="left:2083.00px;top:1255.00px;font-size:18.414px;font-weight:400;color:#4b5568;transform:scaleX(0.9827);">06/08/2025, 1:07PM</div>
<div class="t" style="left:2081.88px;top:1286.00px;font-size:17.666px;font-weight:400;color:#4b5568;transform:scaleX(1.1229);">by Company Admin via payroll</div>
<div class="t" style="left:2447.10px;top:1408.00px;font-size:17.366px;font-weight:400;color:#6b7385;transform:scaleX(1.0071);">Show</div>
<div class="t" style="left:2522.70px;top:1408.00px;font-size:17.366px;font-weight:400;color:#2b3040;transform:scaleX(1.0000);">10</div>
<div class="t" style="left:2628.30px;top:1408.00px;font-size:17.366px;font-weight:400;color:#6b7385;transform:scaleX(1.0627);">Showing 1 - 5 of 5</div>
<div class="t" style="left:548.70px;top:1408.00px;font-size:17.366px;font-weight:700;color:#ffffff;transform:scaleX(1.0000);">1</div>
</body></html>
